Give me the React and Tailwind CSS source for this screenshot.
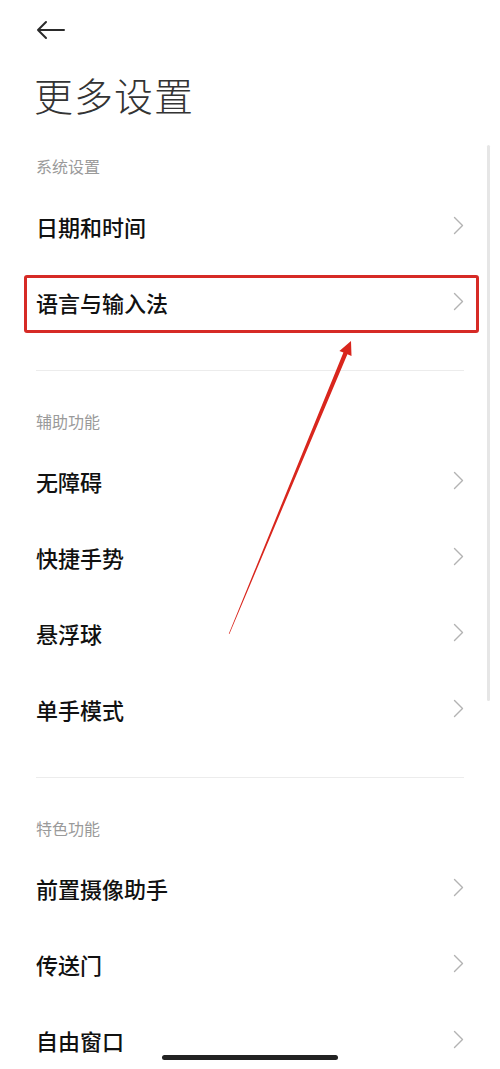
const sections = [
  { title: '系统设置', items: ['日期和时间', '语言与输入法'] },
  { title: '辅助功能', items: ['无障碍', '快捷手势', '悬浮球', '单手模式'] },
  { title: '特色功能', items: ['前置摄像助手', '传送门', '自由窗口'] },
];

const Chevron = () => (
  <svg width="11" height="19" viewBox="0 0 11 19" fill="none" stroke="#b3b3b3" strokeWidth="1.4" strokeLinecap="round" strokeLinejoin="round">
    <path d="M1.5 1.5l8 8-8 8" />
  </svg>
);

const Row = ({ label }) => (
  <div className="h-[76px] flex items-center justify-between pl-[36px] pr-[36px] pb-[3px]">
    <span className="text-[22px] leading-[28px] font-medium text-[#111]">{label}</span>
    <Chevron />
  </div>
);

const App = () => {
  return (
    <div className="relative w-[500px] h-[1069px] overflow-hidden bg-white font-['Noto_Sans_CJK_SC','Noto_Sans',sans-serif]">
      {/* top bar */}
      <div className="h-[58px] flex items-center pl-[36px] pt-[1px]">
        <svg width="30" height="20" viewBox="0 0 30 20" fill="none" stroke="#2a2a2a" strokeWidth="2" strokeLinecap="round" strokeLinejoin="round">
          <path d="M28 10H2M10 2L2 10l8 8" />
        </svg>
      </div>

      <h1 className="mt-[16px] pl-[34px] h-[40px] text-[39px] leading-[40px] font-light text-[#333] tracking-[1px]">更多设置</h1>

      {sections.map((s, i) => (
        <div key={s.title}>
          {i > 0 && <div className="mx-[36px] mt-[29px] h-px bg-[#ececec]" />}
          <div className={`${i === 0 ? 'mt-[43px]' : 'mt-[41px]'} pl-[36px] h-[20px] text-[16px] leading-[18px] text-[#9a9a9a]`}>{s.title}</div>
          <div className="mt-[12px]">
            {s.items.map(it => <Row key={it} label={it} />)}
          </div>
        </div>
      ))}

      {/* annotation: red box + arrow */}
      <div className="absolute left-[24px] top-[275px] w-[455px] h-[58px] border-[3px] border-[#d62a26] rounded-[3px] pointer-events-none" />
      <svg className="absolute inset-0 pointer-events-none" width="500" height="1069" viewBox="0 0 500 1069">
        <polygon
          points="351,341 351.5,356 347.4,354.2 229.4,634 228.8,633.8 343.4,352.4 339.4,351"
          fill="#d9261d"
        />
      </svg>

      {/* scrollbar */}
      <div className="absolute left-[487px] top-[145px] w-[3px] h-[556px] rounded-full bg-[#e6e6e6]" />

      {/* home indicator */}
      <div className="absolute left-[162px] top-[1055px] w-[176px] h-[5px] rounded-full bg-[#222]" />
    </div>
  );
};

export default App;
